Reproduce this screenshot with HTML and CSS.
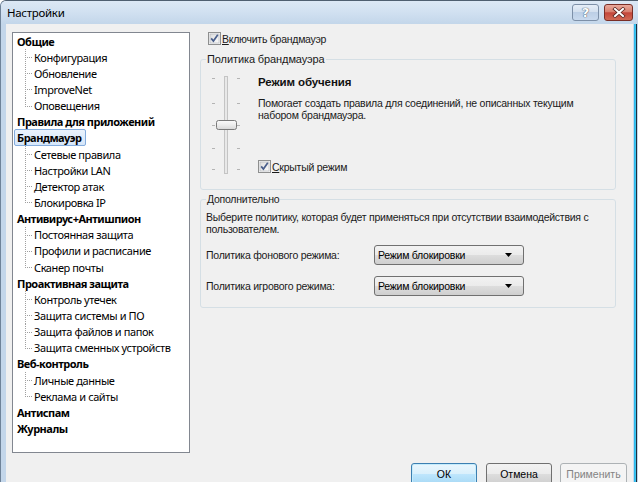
FILE: index.html
```html
<!DOCTYPE html>
<html lang="ru">
<head>
<meta charset="utf-8">
<title>Настройки</title>
<link rel="stylesheet" href="styles.css">
</head>
<body>
<div class="window">
  <div class="titlebar">
    <span class="title">Настройки</span>
    <div class="caption-btns">
      <span class="cap-btn help">?</span>
      <span class="cap-btn close">
        <svg width="14" height="11" viewBox="0 0 14 11"><path d="M3 2 L11 9 M11 2 L3 9" stroke="#5a2520" stroke-width="3.6" stroke-linecap="square"/><path d="M3 2 L11 9 M11 2 L3 9" stroke="#fff" stroke-width="2" stroke-linecap="square"/></svg>
      </span>
    </div>
  </div>
  <div class="frame-row">
    <div class="client">
      <div class="content">
        <ul class="tree">
          <li class="node">Общие</li>
          <li class="leaf">Конфигурация</li>
          <li class="leaf">Обновление</li>
          <li class="leaf">ImproveNet</li>
          <li class="leaf last">Оповещения</li>
          <li class="node">Правила для приложений</li>
          <li class="node"><span class="sel">Брандмауэр</span></li>
          <li class="leaf">Сетевые правила</li>
          <li class="leaf">Настройки LAN</li>
          <li class="leaf">Детектор атак</li>
          <li class="leaf last">Блокировка IP</li>
          <li class="node">Антивирус+Антишпион</li>
          <li class="leaf">Постоянная защита</li>
          <li class="leaf">Профили и расписание</li>
          <li class="leaf last">Сканер почты</li>
          <li class="node">Проактивная защита</li>
          <li class="leaf">Контроль утечек</li>
          <li class="leaf">Защита системы и ПО</li>
          <li class="leaf">Защита файлов и папок</li>
          <li class="leaf last">Защита сменных устройств</li>
          <li class="node">Веб-контроль</li>
          <li class="leaf">Личные данные</li>
          <li class="leaf last">Реклама и сайты</li>
          <li class="node">Антиспам</li>
          <li class="node">Журналы</li>
        </ul>
        <div class="panel">
          <label class="check-row">
            <svg class="cb" width="13" height="13" viewBox="0 0 13 13"><defs><linearGradient id="cbg" x1="0" y1="0" x2="1" y2="1"><stop offset="0" stop-color="#dcdcdc"/><stop offset="1" stop-color="#fbfbfb"/></linearGradient></defs><rect x="0.5" y="0.5" width="12" height="12" fill="#f4f4f4" stroke="#8e8f8f"/><rect x="2" y="2" width="9" height="9" fill="url(#cbg)" stroke="#aeb3b9" stroke-width="0.6"/><path d="M3.2 6.4 L5.4 9 L9.8 2.8" fill="none" stroke="#4a5f8c" stroke-width="1.7"/></svg>
            <span><u>В</u>ключить брандмауэр</span>
          </label>
          <fieldset class="group g1">
            <legend>Политика брандмауэра</legend>
            <div class="policy">
              <svg class="slider" width="32" height="102" viewBox="0 0 32 102">
                <defs><linearGradient id="thumb" x1="0" y1="0" x2="0" y2="1"><stop offset="0" stop-color="#fafafa"/><stop offset="0.5" stop-color="#ececec"/><stop offset="1" stop-color="#d6d6d6"/></linearGradient></defs>
                <g stroke="#b4b4b4" stroke-width="1">
                  <path d="M1 4.5 H4 M1 29.5 H4 M1 51.5 H4 M1 74.5 H4 M1 95.5 H4"/>
                  <path d="M26 4.5 H29 M26 29.5 H29 M26 51.5 H29 M26 74.5 H29 M26 95.5 H29"/>
                </g>
                <rect x="13.5" y="2.5" width="3" height="97" fill="#e8e8e8" stroke="#c4c4c4"/>
                <rect x="5.5" y="46.5" width="20" height="9" rx="2" fill="url(#thumb)" stroke="#7a7a7a"/>
              </svg>
              <div class="policy-text">
                <div class="mode">Режим обучения</div>
                <div class="desc">Помогает создать правила для соединений, не описанных текущим<br>набором брандмауэра.</div>
                <label class="check-row stealth">
                  <svg class="cb" width="13" height="13" viewBox="0 0 13 13"><rect x="0.5" y="0.5" width="12" height="12" fill="#f4f4f4" stroke="#8e8f8f"/><rect x="2" y="2" width="9" height="9" fill="url(#cbg)" stroke="#aeb3b9" stroke-width="0.6"/><path d="M3.2 6.4 L5.4 9 L9.8 2.8" fill="none" stroke="#4a5f8c" stroke-width="1.7"/></svg>
                  <span><u>С</u>крытый режим</span>
                </label>
              </div>
            </div>
          </fieldset>
          <fieldset class="group g2">
            <legend>Дополнительно</legend>
            <div class="note">Выберите политику, которая будет применяться при отсутствии взаимодействия с<br>пользователем.</div>
            <div class="combo-row">
              <span class="combo-label">Политика фонового режима:</span>
              <span class="combo"><span>Режим блокировки</span><svg width="7" height="4" viewBox="0 0 7 4"><path d="M0 0 H7 L3.5 4 Z" fill="#000"/></svg></span>
            </div>
            <div class="combo-row second">
              <span class="combo-label">Политика игрового режима:</span>
              <span class="combo"><span>Режим блокировки</span><svg width="7" height="4" viewBox="0 0 7 4"><path d="M0 0 H7 L3.5 4 Z" fill="#000"/></svg></span>
            </div>
          </fieldset>
        </div>
      </div>
      <div class="buttons">
        <span class="btn default">ОК</span>
        <span class="btn">Отмена</span>
        <span class="btn disabled">Применить</span>
      </div>
    </div>
    <div class="edge-right"></div>
  </div>
</div>
</body>
</html>
```

FILE: styles.css
```css
* { box-sizing: border-box; }
html, body { margin: 0; padding: 0; }
body {
  width: 638px;
  height: 482px;
  overflow: hidden;
  background: #ffffff;
  font-family: "Noto Sans", sans-serif;
}
.window {
  width: 638px;
  height: 482px;
  overflow: hidden;
  display: flex;
  flex-direction: column;
  background: #c3d6ea;
  border-top: 1px solid #4f5f70;
  border-left: 1px solid #6f8399;
  border-top-left-radius: 6px;
}
.titlebar {
  height: 23px;
  flex: none;
  display: flex;
  align-items: flex-start;
  justify-content: space-between;
  background: linear-gradient(to bottom, #dce8f5 0, #d2e1f1 45%, #c3d6ea 100%);
}
.title {
  margin: 3px 0 0 6px;
  font-size: 11.5px;
  letter-spacing: -0.3px;
  line-height: 17px;
  color: #000;
}
.caption-btns {
  display: flex;
  gap: 5px;
  margin: 3px 5px 0 0;
}
.cap-btn {
  height: 17px;
  border-radius: 3px;
  display: flex;
  align-items: center;
  justify-content: center;
}
.help {
  width: 27px;
  border: 1px solid #7d90a8;
  background: linear-gradient(to bottom, #e6eef8 0, #d3e0ef 45%, #bccfe6 50%, #c9daee 100%);
  color: #fff;
  font: bold 13px/15px "DejaVu Sans", sans-serif;
  text-shadow: 0 0 1px #3c4d63, 0 0 1px #3c4d63;
}
.close {
  width: 29px;
  border: 1px solid #7a2e26;
  background: linear-gradient(to bottom, #e9a99c 0, #d8806f 45%, #c4463a 52%, #d06a55 100%);
}
.frame-row {
  flex: 1;
  display: flex;
  padding-left: 5px;
}
.client {
  width: 627px;
  background: #f0f0f0;
  display: flex;
  flex-direction: column;
  padding: 8px 0 0 6px;
}
.edge-right {
  width: 4px;
  background: linear-gradient(to right, #c6d9ed 0 1px, #2fb8ea 1px 2px, #3cc4f0 2px 3px, #1e2d3c 3px 4px);
}
.content {
  display: flex;
  gap: 10px;
}
.tree {
  list-style: none;
  margin: 0;
  padding: 0;
  width: 178px;
  height: 421px;
  flex: none;
  background: #fff;
  border: 1px solid #828790;
  font-size: 11px;
  letter-spacing: -0.4px;
  color: #000;
}
.tree li {
  height: 16.15px;
  display: flex;
  align-items: center;
  white-space: nowrap;
  line-height: 15px;
}
.node {
  font-weight: bold;
  letter-spacing: -0.5px;
  padding-left: 4px;
}
.sel {
  margin-left: -3px;
  padding: 0 3px 0 2px;
  height: 17px;
  line-height: 15px;
  border: 1px solid #84acdd;
  border-radius: 2px;
  background: linear-gradient(to bottom, #eaf3fd, #d5e6fa);
}
.leaf {
  padding-left: 21px;
  background-image:
    repeating-linear-gradient(to bottom, #a0a0a0 0 1px, transparent 1px 2px),
    repeating-linear-gradient(to right, #a0a0a0 0 1px, transparent 1px 2px);
  background-repeat: no-repeat;
  background-position: 12px 0, 12px 8px;
  background-size: 1px 100%, 8px 1px;
}
.leaf.last {
  background-size: 1px 8px, 8px 1px;
}
.panel {
  width: 416px;
  display: flex;
  flex-direction: column;
  font-family: "Liberation Sans", sans-serif;
  font-size: 10.5px;
  letter-spacing: -0.25px;
  color: #1a1a1a;
}
.check-row {
  display: flex;
  align-items: center;
  height: 13px;
  gap: 1px;
  margin-left: 8px;
}
.check-row u { text-decoration: underline; }
.group {
  margin: 0;
  padding: 0 5px;
  border: 1px solid #d5dfe5;
  border-radius: 3px;
  min-width: 0;
}
.group legend {
  padding: 0 1px;
  line-height: 13px;
  color: #1a1a1a;
}
.g1 legend {
  font-size: 11px;
  letter-spacing: -0.1px;
}
.g1 {
  margin-top: 8px;
  padding-top: 8px;
  padding-bottom: 13px;
}
.policy {
  display: flex;
}
.slider {
  margin-left: 5px;
  flex: none;
}
.policy-text {
  margin-left: 15px;
  display: flex;
  flex-direction: column;
}
.mode {
  font-weight: bold;
  font-size: 11.5px;
  letter-spacing: -0.1px;
  line-height: 14px;
  margin-top: 1px;
  color: #111;
}
.desc {
  margin-top: 8px;
  line-height: 12px;
}
.check-row.stealth {
  margin: 39px 0 0 0;
}
.g2 {
  margin-top: 3px;
  padding-top: 5px;
  padding-bottom: 11px;
}
.note {
  line-height: 12px;
}
.combo-row {
  display: flex;
  align-items: center;
  margin-top: 10px;
}
.combo-row.second { margin-top: 11px; }
.combo-label {
  width: 168px;
}
.combo {
  width: 150px;
  height: 20px;
  border: 1px solid #707070;
  border-radius: 3px;
  background: linear-gradient(to bottom, #f2f2f2 0, #ebebeb 50%, #dddddd 51%, #cfcfcf 100%);
  display: flex;
  align-items: center;
  justify-content: space-between;
  padding: 0 11px 0 3px;
  color: #000;
}
.buttons {
  display: flex;
  justify-content: flex-end;
  gap: 9px;
  margin-top: 10px;
  padding-right: 6px;
  font-family: "Liberation Sans", sans-serif;
  font-size: 10.5px;
}
.btn {
  width: 66px;
  height: 22px;
  border: 1px solid #707070;
  border-radius: 3px;
  background: linear-gradient(to bottom, #f2f2f2 0, #ebebeb 50%, #dddddd 51%, #cfcfcf 100%);
  display: flex;
  align-items: center;
  justify-content: center;
  color: #000;
}
.btn.default {
  border-color: #3c7fb1;
  background: linear-gradient(to bottom, #eaf6fd 0, #d9f0fc 50%, #bee6fd 51%, #a7d9f5 100%);
  box-shadow: inset 0 0 0 1px #c5ecfc;
}
.btn.disabled {
  width: 67px;
  margin-left: -1px;
  border-color: #adb2b5;
  background: #f4f4f4;
  color: #838383;
}
```
